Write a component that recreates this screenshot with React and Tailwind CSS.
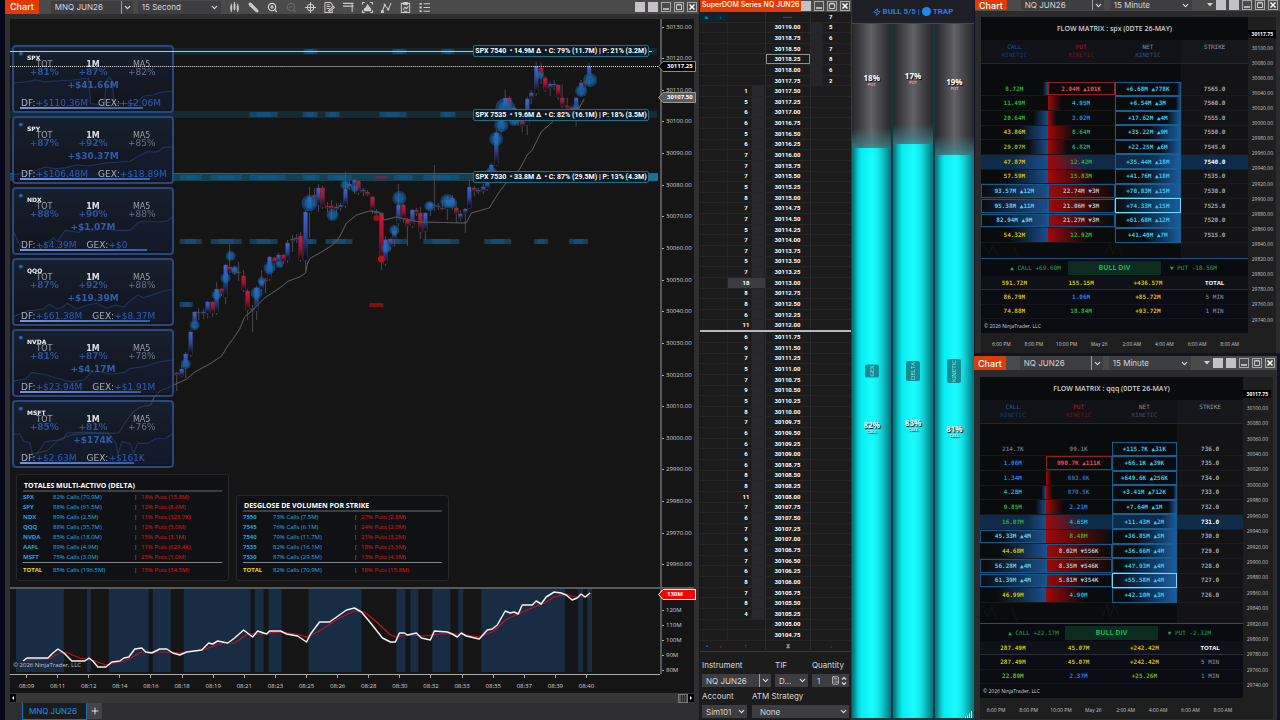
import React, { useState } from 'react';
import { ChevronDown, Pencil, ZoomIn, ZoomOut, Plus, Zap, Calculator } from 'lucide-react';

const cards = [
  { name: 'SPX', tot: '+81%', m1: '+87%', ma5: '+82%', net: '+$41.66M', df: '+$110.36M', gex: '+$2.06M', bar: 84, line: '0,38 12,37 22,35 30,37 60,35 76,33 78,60 92,62 94,36 97,32 100,36 102,60 124,60 132,52 142,51 150,48 161,47' },
  { name: 'SPY', tot: '+87%', m1: '+92%', ma5: '+85%', net: '+$30.37M', df: '+$106.48M', gex: '+$18.89M', bar: 89, line: '0,60 10,58 22,56 32,52 42,54 52,53 64,50 76,51 92,48 104,47 118,46 128,40 136,36 146,36 153,31 161,31' },
  { name: 'NDX', tot: '+88%', m1: '+90%', ma5: '+88%', net: '+$1.07M', df: '+$4.39M', gex: '+$0', bar: 87, line: '0,46 6,60 14,64 26,64 40,52 44,56 52,44 66,46 72,42 80,44 92,42 104,44 118,44 126,36 132,34 148,35 156,34 161,30' },
  { name: 'QQQ', tot: '+87%', m1: '+92%', ma5: '+88%', net: '+$19.39M', df: '+$61.38M', gex: '+$8.37M', bar: 89, line: '0,60 14,54 30,52 36,47 44,52 50,50 54,46 64,52 74,48 84,46 94,51 104,48 112,50 118,44 126,37 132,40 144,36 152,33 161,31' },
  { name: 'NVDA', tot: '+81%', m1: '+87%', ma5: '+78%', net: '+$4.17M', df: '+$23.94M', gex: '+$1.91M', bar: 83, line: '0,53 12,51 18,44 30,46 44,50 58,54 72,52 78,44 86,43 100,46 112,44 118,40 132,38 144,34 152,32 161,31' },
  { name: 'MSFT', tot: '+85%', m1: '+81%', ma5: '+76%', net: '+$174K', df: '+$2.63M', gex: '+$161K', bar: 78, line: '0,34 6,34 10,42 16,43 20,60 32,42 50,40 54,33 72,32 96,33 104,44 106,56 110,42 118,44 122,54 126,44 136,44 144,39 154,39 161,34' },
];

const totals = [
  ['SPX', '82% Calls (70.9M)', '18% Puts (15.8M)'],
  ['SPY', '88% Calls (61.5M)', '12% Puts (8.6M)'],
  ['NDX', '89% Calls (2.5M)', '11% Puts (323.7K)'],
  ['QQQ', '88% Calls (35.7M)', '12% Puts (5.0M)'],
  ['NVDA', '85% Calls (18.0M)', '15% Puts (3.1M)'],
  ['AAPL', '89% Calls (4.9M)', '11% Puts (629.4K)'],
  ['MSFT', '75% Calls (3.0M)', '25% Puts (1.0M)'],
  ['TOTAL', '85% Calls (196.5M)', '15% Puts (34.5M)'],
];

const strikes = [
  ['7550', '73% Calls (7.5M)', '27% Puts (2.8M)'],
  ['7545', '76% Calls (6.1M)', '24% Puts (2.0M)'],
  ['7540', '79% Calls (11.7M)', '21% Puts (3.2M)'],
  ['7535', '82% Calls (16.1M)', '18% Puts (3.5M)'],
  ['7530', '87% Calls (29.5M)', '13% Puts (4.3M)'],
  ['TOTAL', '82% Calls (70.9M)', '18% Puts (15.8M)'],
];

// x, body top, body bottom, 1 = up / 0 = down, wick top, wick bottom
const candles = [
  [177, 373, 375, 0, 372, 391], [182, 369, 376, 1, 365, 377], [186, 354, 368, 1, 352, 378], [191, 332, 355, 1, 330, 357],
  [195, 312, 326, 1, 311, 330], [199, 312, 313, 1, 308, 320], [204, 312, 314, 1, 309, 319], [208, 302, 313, 1, 301, 319],
  [213, 302, 313, 0, 301, 317], [217, 289, 313, 1, 282, 315], [222, 289, 293, 0, 288, 296], [226, 265, 297, 1, 264, 304],
  [230, 267, 271, 0, 244, 273], [235, 268, 272, 1, 266, 275], [239, 272, 273, 0, 262, 281], [244, 276, 290, 0, 270, 292],
  [248, 291, 310, 0, 289, 320], [253, 309, 310, 1, 305, 332], [257, 288, 311, 1, 286, 320], [262, 281, 289, 1, 270, 291],
  [266, 280, 281, 0, 278, 293], [270, 257, 279, 1, 256, 281], [275, 258, 263, 0, 257, 265], [279, 255, 262, 1, 253, 264],
  [284, 255, 261, 0, 254, 264], [288, 243, 260, 1, 240, 263], [293, 239, 241, 1, 235, 252], [297, 238, 240, 1, 234, 243],
  [301, 236, 260, 0, 232, 262], [306, 212, 260, 1, 210, 273], [310, 197, 213, 1, 187, 238], [315, 195, 199, 0, 188, 206],
  [319, 188, 205, 1, 184, 212], [323, 188, 207, 0, 186, 209], [328, 206, 208, 0, 202, 212], [332, 206, 209, 0, 200, 220],
  [337, 207, 209, 1, 203, 216], [341, 205, 208, 1, 203, 211], [346, 189, 206, 1, 172, 208], [350, 184, 188, 1, 180, 190],
  [355, 180, 186, 1, 178, 194], [359, 181, 193, 0, 180, 195], [364, 190, 192, 1, 188, 196], [368, 192, 195, 0, 190, 196],
  [373, 197, 210, 0, 196, 214], [377, 212, 214, 1, 209, 216], [382, 213, 262, 0, 212, 270], [386, 240, 264, 1, 236, 266],
  [391, 239, 247, 1, 238, 250], [395, 231, 239, 1, 226, 247], [399, 205, 223, 1, 184, 226], [404, 205, 219, 0, 204, 223],
  [408, 220, 226, 0, 218, 246], [413, 210, 226, 1, 209, 228], [417, 210, 213, 0, 208, 216], [421, 213, 232, 0, 207, 239],
  [426, 213, 231, 1, 212, 240], [431, 203, 210, 1, 202, 216], [435, 205, 206, 0, 165, 211], [439, 206, 207, 1, 203, 210],
  [443, 208, 209, 0, 200, 210], [448, 200, 209, 1, 196, 220], [453, 198, 207, 0, 195, 210], [457, 208, 214, 0, 206, 223],
  [461, 214, 218, 1, 210, 221], [466, 209, 213, 1, 208, 233], [470, 187, 208, 1, 180, 209], [475, 188, 191, 0, 186, 196],
  [479, 190, 192, 1, 188, 194], [484, 187, 191, 1, 184, 194], [488, 181, 189, 1, 180, 191], [492, 165, 173, 1, 163, 180],
  [497, 133, 165, 1, 130, 166], [502, 115, 130, 1, 110, 133], [506, 98, 110, 1, 90, 114], [510, 98, 108, 0, 96, 112],
  [515, 108, 122, 1, 106, 125], [519, 118, 123, 0, 116, 126], [523, 121, 126, 0, 119, 132], [528, 99, 125, 1, 97, 135],
  [532, 93, 98, 1, 90, 104], [537, 66, 93, 1, 62, 96], [542, 68, 74, 0, 63, 84], [546, 78, 90, 0, 76, 92],
  [551, 84, 88, 1, 82, 96], [555, 84, 86, 1, 80, 90], [559, 85, 97, 0, 84, 100], [563, 98, 106, 0, 84, 108],
  [568, 106, 108, 0, 98, 110], [572, 108, 110, 0, 106, 114], [577, 98, 109, 1, 97, 127], [582, 83, 90, 1, 80, 96],
  [586, 82, 84, 0, 80, 90], [590, 66, 80, 1, 63, 86],
];

const bubbles = [
  [310, 203, 8], [333, 215, 6], [346, 185, 5], [355, 188, 4], [387, 248, 5], [395, 230, 5], [400, 198, 7], [430, 206, 5],
  [448, 201, 7], [453, 203, 5], [492, 173, 6], [497, 139, 7], [502, 125, 7], [506, 108, 10], [515, 120, 6], [541, 75, 4],
  [577, 108, 4], [582, 91, 6], [591, 80, 7], [231, 256, 5], [226, 278, 5], [235, 270, 4], [217, 295, 5], [195, 325, 5],
  [186, 364, 5], [257, 293, 6], [262, 281, 4], [270, 268, 6], [280, 264, 4],
];

const heat = [
  [304, 14, 51], [393, 14, 51], [442, 13, 51],
  [250, 28, 114], [303, 15, 114], [326, 14, 114], [380, 27, 114], [441, 15, 114],
  [180, 22, 177], [211, 31, 177], [250, 36, 177], [303, 17, 177], [328, 24, 177], [395, 18, 177], [424, 36, 177],
  [180, 22, 241], [211, 31, 241], [250, 28, 241], [303, 14, 241], [326, 27, 241], [380, 28, 241], [424, 36, 241], [485, 27, 241], [535, 14, 241], [570, 19, 241],
  [180, 13, 304],
];

const MA = '31,454 47,451 52,446 60,439 75,434 119,433 125,423 133,412 141,407 151,405 154,398 160,391 172,386 187,379 195,372 210,364 222,356 228,346 234,338 240,329 245,317 254,309 265,298 280,288 289,281 300,277 306,273 308,263 311,258 322,252 333,245 340,237 347,223 357,215 370,211 380,212 385,220 397,217 420,222 467,223 472,213 490,208 500,192 513,175 520,170 528,155 533,150 542,132 550,125 557,118 567,110 580,108 585,99';
const FLOW = '23,661 27,658 48,658 53,653 58,649 64,653 72,661 85,661 89,658 93,661 98,667 106,667 112,662 120,661 124,658 129,657 135,649 142,648 146,652 152,653 160,649 167,649 173,653 180,655 187,652 202,650 209,643 213,644 218,641 228,643 235,638 244,630 253,637 258,631 267,634 270,631 281,631 287,634 298,636 307,642 311,634 320,622 330,622 347,610 355,608 362,612 372,624 383,638 391,642 396,642 400,633 405,633 408,635 417,633 422,638 431,640 435,631 448,632 453,634 458,637 462,633 467,636 480,639 488,630 493,629 498,625 506,611 511,613 515,612 519,614 523,605 533,605 537,601 542,604 547,597 555,592 562,593 567,595 573,600 578,598 582,594 586,597 591,593';
const FLOW_AVG = '23,660 48,659 60,653 68,653 80,658 92,660 106,665 125,661 142,652 167,652 180,653 203,650 220,644 235,643 248,634 262,634 280,632 297,634 307,637 320,631 340,618 355,611 365,612 375,620 390,634 396,637 410,635 425,636 440,634 460,634 480,637 495,631 506,620 523,612 545,603 555,597 567,594 575,597 591,597';
const flowZones = [[16, 64], [87, 91], [109, 149], [153, 171], [184, 251], [255, 264], [269, 282], [309, 362], [397, 406], [411, 419], [433, 451], [459, 464], [482, 566], [579, 584], [588, 593]];

const times = ['08:09', '08:11', '08:12', '08:14', '08:16', '08:18', '08:19', '08:21', '08:23', '08:25', '08:26', '08:28', '08:30', '08:32', '08:33', '08:35', '08:37', '08:39', '08:40'];
const prices = Array.from({ length: 18 }, (_, i) => (30130 - i * 10).toFixed(2));

const bids = [1, 5, 6, 6, 5, 6, 7, 7, 7, 5, 8, 7, 7, 5, 7, 7, 5, 7, 18, 8, 8, 6, 11, 6, 9, 7, 5, 7, 9, 5, 8, 7, 6, 6, 6, 6, 8, 8, 11, 7, 6, 7, 9, 6, 7, 6, 8, 7, 8, 4];
const asks = [5, 6, 7, 8, 6, 2];
const ladder = Array.from({ length: 58 }, (_, i) => ({
  price: (30119 - i * 0.25).toFixed(2),
  ask: asks[i] ?? '',
  bid: bids[i - 6] ?? '',
}));

// level is the height of the fill in %, shift moves the labels with it
const meters = [
  { name: 'GEX', put: '18%', call: '82%', level: 82.2, shift: 0 },
  { name: 'DELTA', put: '17%', call: '83%', level: 82.7, shift: -2 },
  { name: 'KINETIC', put: '19%', call: '81%', level: 81.1, shift: 4 },
];

const G = '#2fb02f';
const Y = '#d4be00';
const C = '#13b4d6';
const B = '#2080e8';
const BOX = '#5ccbee';
const PBOX = '#a9bfcb';

// cells: [text, colour, shade width in %, box]
const spx = {
  title: 'FLOW MATRIX : spx (0DTE 26-MAY)',
  bias: 'BULL DIV',
  callDiv: '▲ CALL +69.60M',
  putDiv: '▼ PUT -18.56M',
  rows: [
    ['7565.0', ['8.72M', G, 8], ['2.04M ▲101K', '#e05252', 0, 'red'], ['+6.68M ▲778K', 6]],
    ['7560.0', ['11.49M', G, 0], ['4.95M', C, 20], ['+6.54M ▲3M', 8]],
    ['7555.0', ['20.64M', G, 22], ['3.02M', B, 12], ['+17.62M ▲4M', 22]],
    ['7550.0', ['43.86M', Y, 45], ['8.64M', '#1fae5a', 38], ['+35.22M ▲9M', 48]],
    ['7545.0', ['29.07M', '#86b31c', 30], ['6.82M', '#16a77a', 30], ['+22.25M ▲6M', 32]],
    ['7540.0', ['47.87M', Y, 50], ['12.42M', G, 55], ['+35.44M ▲18M', 50]],
    ['7535.0', ['57.59M', Y, 60], ['15.83M', '#4da628', 70], ['+41.76M ▲18M', 58]],
    ['7530.0', ['93.57M ▲12M', BOX, 98, 'blue'], ['22.74M ▼3M', PBOX, 100, 'blue'], ['+70.83M ▲15M', 96]],
    ['7525.0', ['95.38M ▲11M', BOX, 100, 'blue'], ['21.06M ▼3M', PBOX, 94, 'blue'], ['+74.33M ▲15M', 100, true]],
    ['7520.0', ['82.94M ▲9M', BOX, 88, 'blue'], ['21.27M ▼3M', PBOX, 95, 'blue'], ['+61.68M ▲12M', 84]],
    ['7515.0', ['54.32M', Y, 57], ['12.92M', G, 58], ['+41.40M ▲7M', 56]],
  ],
  active: '7540.0',
  totals: [
    ['591.72M', Y, '155.15M', Y, '+436.57M', Y, 'TOTAL'],
    ['86.79M', Y, '1.06M', B, '+85.72M', Y, '5 MIN'],
    ['74.88M', Y, '18.84M', G, '+93.72M', Y, '1 MIN'],
  ],
};

const qqq = {
  title: 'FLOW MATRIX : qqq (0DTE 26-MAY)',
  bias: 'BULL DIV',
  callDiv: '▲ CALL +22.17M',
  putDiv: '▼ PUT -2.32M',
  rows: [
    ['736.0', ['214.7K', '#6d7178', 0], ['99.1K', '#6d7178', 0], ['+115.7K ▲31K', 0]],
    ['735.0', ['1.06M', B, 0], ['990.7K ▲111K', '#e05252', 0, 'red'], ['+66.1K ▲39K', 0]],
    ['734.0', ['1.34M', B, 0], ['693.6K', '#2a6bb8', 9], ['+649.6K ▲256K', 0]],
    ['733.0', ['4.28M', C, 7], ['870.5K', '#2a6bb8', 10], ['+3.41M ▲712K', 6]],
    ['732.0', ['9.85M', G, 16], ['2.21M', B, 26], ['+7.64M ▲1M', 14]],
    ['731.0', ['16.07M', G, 28], ['4.65M', C, 55], ['+11.43M ▲2M', 24]],
    ['730.0', ['45.33M ▲4M', BOX, 74, 'blue'], ['8.48M', G, 100], ['+36.85M ▲5M', 66]],
    ['729.0', ['44.68M', Y, 72], ['8.02M ▼556K', PBOX, 95, 'blue'], ['+36.66M ▲4M', 66]],
    ['728.0', ['56.28M ▲4M', BOX, 92, 'blue'], ['8.35M ▼546K', PBOX, 98, 'blue'], ['+47.93M ▲4M', 86]],
    ['727.0', ['61.39M ▲4M', BOX, 100, 'blue'], ['5.81M ▼354K', PBOX, 68, 'blue'], ['+55.58M ▲4M', 100, true]],
    ['726.0', ['46.99M', Y, 76], ['4.90M', C, 58], ['+42.10M ▲3M', 76]],
  ],
  active: '731.0',
  totals: [
    ['287.49M', Y, '45.07M', Y, '+242.42M', Y, 'TOTAL'],
    ['287.49M', Y, '45.07M', Y, '+242.42M', Y, '5 MIN'],
    ['22.89M', '#6fb322', '2.37M', B, '+25.26M', '#6fb322', '1 MIN'],
  ],
};

const sideTimes = ['6:00 PM', '8:00 PM', '10:00 PM', 'May 26', '2:00 AM', '4:00 AM', '6:00 AM', '8:00 AM'];
const sidePrices = Array.from({ length: 19 }, (_, i) => (30100 - i * 20).toFixed(2));

const boxStyles = {
  red: 'shadow-[inset_0_0_0_1px_#8e2024]',
  blue: 'shadow-[inset_0_0_0_1px_#16588a]',
};

function Select({ label, value, options, className = '', split }) {
  const [current, setCurrent] = useState(value);
  return (
    <span className={`relative flex items-center bg-[#3d3d42] ${className}`}>
      <select
        aria-label={label}
        value={current}
        onChange={(e) => setCurrent(e.target.value)}
        className="h-full w-full appearance-none overflow-hidden bg-transparent pl-1 pr-3 text-[8px] leading-[10px] text-[#d6d6d6] outline-none"
      >
        {[value, ...(options || [])].map((o) => <option key={o} value={o}>{o}</option>)}
      </select>
      <span className={`pointer-events-none absolute inset-y-0 right-0 flex w-3 items-center justify-center ${split ? 'border-l border-[#a0a0a0]' : ''}`}>
        <ChevronDown size={9} strokeWidth={3} color="#e0e0e0" />
      </span>
    </span>
  );
}

function WindowButtons({ blanks = 2 }) {
  const box = 'h-[10px] w-[10px] shrink-0';
  return (
    <div className="flex items-center gap-[3px]">
      {Array.from({ length: blanks }, (_, i) => (
        <button key={i} aria-label={`Link ${i + 1}`} className={`${box} bg-[#c4c2c4]`} />
      ))}
      <button aria-label="Minimize" className={`${box} border border-[#a8a8a8]`}>
        <svg viewBox="0 0 8 8" className="block h-full w-full"><path d="M1 6h6" stroke="#eee" strokeWidth="1.3" /></svg>
      </button>
      <button aria-label="Maximize" className={`${box} border border-[#a8a8a8]`}>
        <svg viewBox="0 0 8 8" className="block h-full w-full"><path d="M1.5 2h5v4.5h-5z M1.5 1.3h5" stroke="#ddd" fill="none" strokeWidth="0.9" /></svg>
      </button>
      <button aria-label="Close" className={`${box} border border-[#a8a8a8]`}>
        <svg viewBox="0 0 8 8" className="block h-full w-full"><path d="M1.5 1.5l5 5M6.5 1.5l-5 5" stroke="#fff" strokeWidth="1.5" /></svg>
      </button>
    </div>
  );
}

function ToolIcon({ d, fill }) {
  return (
    <svg viewBox="0 0 12 12" width="11" height="11" className="shrink-0">
      {fill && <path d={fill} fill="#cfcaca" />}
      <path d={d} fill="none" stroke="#cfcaca" strokeWidth="1.1" />
    </svg>
  );
}

function Toolbar() {
  return (
    <div className="flex items-center gap-2 pl-[8px]">
      <ToolIcon d="M2.5 2v9M6 0v9M9.5 2v9" fill="M1.5 4h2v5h-2z M5 2h2v6h-2z M8.5 4h2v5h-2z" />
      <Pencil size={11} color="#cfcaca" fill="#cfcaca" className="-scale-x-100" />
      <ZoomIn size={11} color="#dedada" strokeWidth={2.5} />
      <ZoomOut size={11} color="#666" strokeWidth={2.5} />
      <svg viewBox="0 0 12 12" width="11" height="11" className="shrink-0">
        <circle cx="6" cy="6" r="3.5" fill="none" stroke="#cfcaca" strokeWidth="1.1" />
        <path d="M6 0v12M0 6h12" stroke="#cfcaca" strokeWidth="1.1" />
      </svg>
      <ToolIcon d="M1 .6h6l2 2v2M9 9v2.4H1V.6M3 3h3M3 5h4M3 7h3M5 9.5l5-5 1.3 1.3-5 4.5z" />
      <ToolIcon d="M.5 1.5h11M.5 4.5h11M10 1v10M0 1.5h2M0 4.5h2" />
      <ToolIcon d="M.6 3V.6H3M9 .6h2.4V3M.6 9v2.4H3M9 11.4h2.4V9" fill="M2 10V7l2-1 2-4 2 3 2 2v3z" />
      <ToolIcon d="M1.5 10L4 3l4 5.5L11 1" fill="M0 9h3v3H0z M3 2h2v2H3z M7 7h2v2H7z" />
      <ToolIcon d="M1.5 1.5h9v10h-9zM4 .6h4v2H4zM3.5 8.5l2-3 1.5 2L9 4.5M4 10h4" />
      <ToolIcon d="M5 2h7M5 6h7M5 10h7" fill="M.5 1h2.5v2H.5z M.5 5h2.5v2H.5z M.5 9h2.5v2H.5z" />
    </div>
  );
}

function AssetCard({ card }) {
  return (
    <article className="relative h-[68px] rounded-[4px] border-2 border-[#2a4a86] bg-linear-to-b from-[#172130] to-[#10141c] font-['DejaVu_Sans',sans-serif]">
      <svg viewBox="0 0 161 68" preserveAspectRatio="none" className="absolute inset-0 h-full w-full">
        <polygon points={`0,66 ${card.line} 161,66`} fill="#16223c" opacity="0.4" />
        <polyline points={card.line} fill="none" stroke="#20375f" strokeWidth="1.2" />
        <circle cx="7" cy="7" r="2" fill="#3561b4" />
      </svg>
      <div className="relative px-[6px] pt-[8px]">
        <h3 className="pl-[7px] text-[6px] leading-[6px] font-bold text-white">{card.name}</h3>
        <dl className="grid grid-cols-3 text-center">
          <div>
            <dt className="text-[8px] leading-[7px] text-[#a4a8b0]">TOT</dt>
            <dd className="text-[9px] leading-[8px] font-bold text-[#2f56a0]">{card.tot}</dd>
          </div>
          <div>
            <dt className="text-[8px] leading-[7px] font-bold text-[#e4e7ec]">1M</dt>
            <dd className="text-[9px] leading-[8px] font-bold text-[#2f56a0]">{card.m1}</dd>
          </div>
          <div>
            <dt className="text-[8px] leading-[7px] text-[#a4a8b0]">MA5</dt>
            <dd className="text-[9px] leading-[8px] text-[#68758f]">{card.ma5}</dd>
          </div>
        </dl>
        <p className="pt-[4px] text-center text-[9px] leading-[10px] font-bold text-[#3560b0]">{card.net}</p>
        <p className="flex gap-[10px] pt-[10px] pl-px text-[9px] leading-[7px] whitespace-nowrap text-[#b4b8be]">
          <span>DF:<span className="text-[#2f60c4]">{card.df}</span></span>
          <span>GEX:<span className="text-[#2f60c4]">{card.gex}</span></span>
        </p>
        <div className="h-[2px] bg-[#141c2c]">
          <div className="h-full bg-linear-to-r from-[#7d9be8] to-[#3762ae]" style={{ width: `${card.bar}%` }} />
        </div>
      </div>
    </article>
  );
}

function VolumePanel({ title, rows, className }) {
  return (
    <section className={`w-[213px] rounded-[3px] border border-[#26272b] bg-[#0f1115] px-[6px] pb-[5px] font-['Open_Sans',sans-serif] ${className}`}>
      <h2 className="border-b-2 border-[#3c3e42] pl-px text-[7px] leading-[9px] font-bold text-white">{title}</h2>
      <table className="w-full border-collapse text-[6px] leading-[10px]">
        <tbody>
          {rows.map(([name, calls, puts]) => {
            const last = name === 'TOTAL';
            return (
              <tr key={name} className={last ? 'border-t border-[#85878a]' : ''}>
                <th scope="row" className={`w-[30px] p-0 text-left font-bold ${last ? 'pt-[2px] text-[#f0dc20]' : 'text-[#1ea4e0]'}`}>{name}</th>
                <td className={`w-[81px] p-0 text-[#1cb2ea] ${last ? 'pt-[2px]' : ''}`}>{calls}</td>
                <td className={`w-[7px] p-0 text-[#9a9a9a] ${last ? 'pt-[2px]' : ''}`}>|</td>
                <td className={`p-0 text-[#f01010] ${last ? 'pt-[2px]' : ''}`}>{puts}</td>
              </tr>
            );
          })}
        </tbody>
      </table>
    </section>
  );
}

function LevelTag({ children, className }) {
  return (
    <div className={`absolute right-[11px] flex h-[12px] w-[176px] items-center justify-center rounded-[2px] border border-[#17708f] bg-[#0e1c24] font-['Roboto',sans-serif] text-[7px] leading-[10px] font-bold whitespace-nowrap text-white ${className}`}>
      {children}
    </div>
  );
}

function PriceChart() {
  return (
    <div className="relative min-w-0 flex-1 overflow-hidden font-['Open_Sans',sans-serif]">
      <svg viewBox="10 19 651 568" preserveAspectRatio="none" className="absolute inset-0 h-full w-full">
        <defs>
          <linearGradient id="up" x1="0" y1="0" x2="0" y2="1">
            <stop offset="0" stopColor="#4067d8" /><stop offset="0.5" stopColor="#2b449c" /><stop offset="1" stopColor="#07080d" />
          </linearGradient>
          <linearGradient id="down" x1="0" y1="0" x2="0" y2="1">
            <stop offset="0" stopColor="#d4143c" /><stop offset="0.5" stopColor="#a01030" /><stop offset="1" stopColor="#1a070c" />
          </linearGradient>
        </defs>
        <rect x="10" y="48" width="648" height="7" fill="#14272f" />
        <rect x="10" y="111" width="648" height="7" fill="#142b33" />
        <rect x="10" y="174" width="649" height="7" fill="#134152" />
        <rect x="10" y="173" width="649" height="1" fill="#176c86" />
        <rect x="648" y="174" width="11" height="7" fill="#14759a" />
        {heat.map(([x, w, y]) => (
          <g key={`${x}-${y}`} fill="#155a8e">
            <rect x={x} y={y - 2} width={w} height="5" opacity="0.6" />
            <rect x={x + w / 4} y={y - 2} width={w / 2} height="5" opacity="0.5" />
          </g>
        ))}
        <rect x="370" y="303" width="14" height="4" fill="#7e1010" />
        <rect x="376" y="176" width="12" height="3" fill="#5a3048" />
        {candles.map(([x, top, bottom, up, hi, lo]) => (
          <g key={x}>
            <path d={`M${x} ${hi}V${lo}`} stroke="#56565a" strokeWidth="0.8" />
            <rect x={x - 2} y={top} width="4" height={bottom - top} fill={up ? 'url(#up)' : 'url(#down)'} stroke="#3f3f48" strokeWidth="0.4" />
          </g>
        ))}
        <polyline points={MA} fill="none" stroke="#56565a" strokeWidth="1" />
        {bubbles.map(([x, y, r]) => (
          <g key={`${x}-${y}`} fill="#1a72bd">
            <circle cx={x} cy={y} r={r} opacity="0.45" />
            <circle cx={x} cy={y} r={r * 0.65} opacity="0.5" />
          </g>
        ))}
        <circle cx="382" cy="259" r="3.5" fill="#b01414" />
        <circle cx="377" cy="218" r="3" fill="#981414" />
      </svg>
      <div className="absolute top-[26px] left-[2px] flex w-[162px] flex-col gap-[3px] opacity-95">
        {cards.map((card) => <AssetCard key={card.name} card={card} />)}
      </div>
      <svg viewBox="10 19 651 568" preserveAspectRatio="none" className="pointer-events-none absolute inset-0 h-full w-full">
        <path d="M10 51.5H653" stroke="#d2d250" strokeWidth="1" />
        <path d="M10 66.5H661" stroke="#e8e8e8" strokeWidth="1" strokeDasharray="1 1" />
        <polyline points={MA} fill="none" stroke="#56565a" strokeWidth="0.8" opacity="0.6" />
      </svg>
      <LevelTag className="top-[26px]">SPX 7540 &nbsp;• 14.9M Δ &nbsp;• C: 79% (11.7M) | P: 21% (3.2M)</LevelTag>
      <LevelTag className="top-[90px]">SPX 7535 &nbsp;• 19.6M Δ &nbsp;• C: 82% (16.1M) | P: 18% (3.5M)</LevelTag>
      <LevelTag className="top-[152px]">SPX 7530 &nbsp;• 33.8M Δ &nbsp;• C: 87% (29.5M) | P: 13% (4.3M)</LevelTag>
      <div className="absolute bottom-[6px] left-[6px] flex items-end gap-[7px]">
        <VolumePanel title="TOTALES MULTI-ACTIVO (DELTA)" rows={totals} className="pt-[6px]" />
        <VolumePanel title="DESGLOSE DE VOLUMEN POR STRIKE" rows={strikes} className="pt-[5px]" />
      </div>
    </div>
  );
}

function AxisFlag({ children, className, fill, stroke }) {
  return (
    <div className={`absolute -left-[4px] flex h-[11px] w-[38px] items-center pl-[9px] text-[6px] font-bold text-white ${className}`}>
      <svg viewBox="0 0 38 11" preserveAspectRatio="none" className="absolute inset-0 h-full w-full">
        <path d="M.5 5.5L5 .5H37.5V10.5H5z" fill={fill} stroke={stroke} />
      </svg>
      <span className="relative">{children}</span>
    </div>
  );
}

function MainWindow() {
  return (
    <main className="flex min-w-0 flex-1 flex-col border-r border-[#1a1a1c] bg-[#2f2f32]">
      <header className="flex h-[14px] shrink-0 items-center bg-[#4a4a4b] pr-[2px]">
        <h1 className="flex h-full items-center bg-[#e03a06] px-[5px] text-[9px] font-medium text-white">Chart</h1>
        <Select label="Instrument" value="MNQ JUN26" className="ml-[12px] h-[13px] w-[82px]" split />
        <Select label="Interval" value="15 Second" options={['15 Minute']} className="ml-[5px] h-[13px] w-[83px]" />
        <Toolbar />
        <div className="ml-auto"><WindowButtons /></div>
      </header>
      <div className="mx-[5px] mt-[5px] flex min-h-0 flex-1 flex-col bg-[#151515]">
        <div className="flex min-h-0 flex-1">
          <PriceChart />
          <div className="relative flex w-[34px] shrink-0 flex-col justify-between border-l-2 border-[#58585a] pb-[14px] font-['Open_Sans',sans-serif] text-[6px] text-[#cfcfcf]">
            {prices.map((p) => (
              <div key={p} className="flex h-[16px] items-center gap-[2px]"><i className="h-px w-[2px] bg-[#aaa]" />{p}</div>
            ))}
            <AxisFlag className="top-[42px]" fill="#000" stroke="#8a8a8a">30117.25</AxisFlag>
            <AxisFlag className="top-[73px]" fill="#5c5c5c" stroke="#9a9a9a">30107.50</AxisFlag>
          </div>
        </div>
        <div className="flex h-[87px] shrink-0 border-t-2 border-[#58585a]">
          <div className="relative min-w-0 flex-1">
            <svg viewBox="10 589 651 85" preserveAspectRatio="none" className="absolute inset-0 h-full w-full">
              {flowZones.map(([a, b]) => <rect key={a} x={a} y="588" width={b - a} height="84" fill="#182c44" />)}
              <polyline points={FLOW_AVG} fill="none" stroke="#c80f1c" strokeWidth="1.2" />
              <polyline points={FLOW} fill="none" stroke="#f2f2f2" strokeWidth="1.5" strokeLinejoin="round" />
            </svg>
            <p className="absolute bottom-[5px] left-[3px] font-['Open_Sans',sans-serif] text-[6px] leading-[8px] text-[#c6c6c6]">© 2026 NinjaTrader, LLC</p>
          </div>
          <div className="relative flex w-[34px] shrink-0 flex-col border-l-2 border-[#58585a] pt-[14px] font-['Open_Sans',sans-serif] text-[6px] leading-[15px] text-[#cfcfcf]">
            {['120M', '110M', '100M', '90M', '80M'].map((v) => (
              <div key={v} className="flex shrink-0 items-center gap-[2px]"><i className="h-px w-[2px] bg-[#aaa]" />{v}</div>
            ))}
            <AxisFlag className="top-0" fill="#f00" stroke="#fff">130M</AxisFlag>
          </div>
        </div>
        <div className="h-[19px] shrink-0 pr-[34px]">
          <div className="flex border-t border-[#a8a8a8] pr-[58px] pl-px font-['Open_Sans',sans-serif] text-[6px] leading-[8px] text-[#d0d0d0]">
            {times.map((t) => (
              <div key={t} className="flex flex-1 flex-col items-center gap-[4px]"><i className="h-[3px] w-px bg-[#aaa]" />{t}</div>
            ))}
          </div>
        </div>
      </div>
      <div className="mx-[5px] flex h-[10px] shrink-0 items-center justify-between bg-[#373737] text-white">
        <button aria-label="Scroll left" className="flex h-[8px] w-[6px] items-center justify-center bg-black">
          <svg viewBox="0 0 4 4" width="4" height="4"><path d="M3 0v4L1 2z" fill="#fff" /></svg>
        </button>
        <div className="flex items-center">
          <span className="flex h-[9px] w-[10px] justify-center gap-px border border-[#777] bg-[#555]">
            <i className="w-px bg-[#222]" /><i className="w-px bg-[#222]" /><i className="w-px bg-[#222]" />
          </span>
          <button aria-label="Scroll right" className="flex h-[8px] w-[6px] items-center justify-center bg-black">
            <svg viewBox="0 0 4 4" width="4" height="4"><path d="M1 0v4L3 2z" fill="#fff" /></svg>
          </button>
        </div>
      </div>
      <footer className="flex h-[17px] shrink-0 bg-[#2f2f32] pl-[17px]">
        <button className="w-[65px] border border-t-0 border-[#1272b8] bg-[#1c1c1e] pr-[3px] text-[8px] leading-[13px] font-medium text-[#1585d8]">MNQ JUN26</button>
        <button aria-label="Add tab" className="flex h-[16px] w-[15px] items-center justify-center bg-[#444448]"><Plus size={10} color="#fff" /></button>
      </footer>
    </main>
  );
}

function SuperDom() {
  return (
    <section className="flex w-[152px] shrink-0 flex-col border-r border-[#3a3a3c] bg-[#1c1c1c] text-[#d8d8d8]">
      <header className="flex h-[12px] shrink-0 items-center justify-between bg-[#4a4a4b] pr-px">
        <h2 className="flex h-full items-center bg-[#e03a06] px-[2px] pb-px text-[7px] font-medium whitespace-nowrap text-white">SuperDOM Series NQ JUN26</h2>
        <WindowButtons blanks={1} />
      </header>
      <div className="min-h-0 flex-1">
        <table className="h-full w-full table-fixed border-collapse text-center font-['Roboto',sans-serif] text-[6px] leading-[8px] font-bold text-white">
          <colgroup><col className="w-[27px]" /><col className="w-[38px]" /><col className="w-[45px]" /><col /></colgroup>
          <tbody>
            <tr className="border-b border-[#262626]">
              <td className="p-0"><span className="flex gap-px text-[#1d93b8]"><i className="w-[13px] bg-[#072834] not-italic">▴</i><i className="w-[13px] bg-[#072834] not-italic">‹</i></span></td>
              <td className="p-0" />
              <td className="border-x border-[#2a2a2a] p-0 text-[#3b82c4]">----</td>
              <td className="p-0">7</td>
            </tr>
            {ladder.map(({ price, bid, ask }) => (
              <tr key={price} className={price === '30112.00' ? 'border-b-2 border-[#b9b9b9]' : 'border-b border-[#262626]'}>
                <td className="border-r border-[#262626] p-0" />
                <td className={`p-0 pl-0 ${bid === 18 ? 'bg-[#3b3b40]' : bid ? 'bg-linear-to-r from-transparent from-65% to-[#29292c] to-65%' : ''}`}>{bid}</td>
                <td className={`border-x border-[#2a2a2a] p-0 ${price === '30118.25' ? 'shadow-[inset_0_0_0_1px_#8e8e8e]' : ''}`}>{price}</td>
                <td className={`p-0 ${ask ? 'bg-linear-to-r from-[#26262a] from-30% to-transparent to-30%' : ''}`}>{ask}</td>
              </tr>
            ))}
            <tr className="border-y border-[#3a3a3a] text-[6px]">
              <td className="p-0"><span className="flex justify-around"><i className="text-[#1f6fb4] not-italic">▪</i><i className="text-[#c32222] not-italic">›</i></span></td>
              <td className="p-0 text-[#2f7ccc]">↑</td>
              <td className="border-x border-[#2a2a2a] p-0 text-[#999]">⧗</td>
              <td className="p-0 text-[#d82020]">↓</td>
            </tr>
          </tbody>
        </table>
      </div>
      <form className="flex h-[68px] shrink-0 flex-col px-[2px] pt-[8px] text-[8px] leading-[10px]">
        <div className="flex gap-[4px]">
          <div className="w-[69px]"><span>Instrument</span><Select label="Instrument" value="NQ JUN26" className="mt-[4px] h-[13px]" split /></div>
          <div className="w-[33px]"><span>TIF</span><Select label="TIF" value="D..." options={['Day', 'Gtc']} className="mt-[4px] h-[13px]" /></div>
          <div className="min-w-0 flex-1">
            <label htmlFor="qty">Quantity</label>
            <span className="mt-[4px] flex h-[13px] items-center bg-[#3d3d42] pr-px">
              <input id="qty" defaultValue="1" className="w-0 min-w-0 flex-1 bg-transparent pl-[5px] text-[8px] outline-none" />
              <Calculator size={9} color="#d6d6d6" />
              <svg viewBox="0 0 8 12" width="8" height="12"><path d="M2 4.5l2-2 2 2M2 7.5l2 2 2-2" fill="none" stroke="#e0e0e0" strokeWidth="1.2" /></svg>
            </span>
          </div>
        </div>
        <div className="mt-[4px] flex gap-[5px]">
          <div className="w-[45px]"><span>Account</span><Select label="Account" value="Sim101" className="mt-[4px] h-[13px]" /></div>
          <div className="min-w-0 flex-1"><span>ATM Strategy</span><Select label="ATM Strategy" value="None" className="mt-[4px] h-[13px] pl-[4px]" /></div>
        </div>
      </form>
    </section>
  );
}

function Meter({ meter }) {
  return (
    <div className="relative flex flex-1 flex-col justify-end overflow-hidden bg-linear-to-r from-[#27272b] via-[#626266] to-[#27272b] font-['Open_Sans',sans-serif]">
      <div className="relative bg-linear-to-r from-[#04777f] via-[#22ffff] to-[#04777f]" style={{ height: `${meter.level}%` }}>
        <div className="absolute inset-0 bg-linear-to-r from-transparent from-5% via-[#00f2fa]/90 via-25% to-transparent to-95%" />
        <div className="absolute inset-x-[12px] inset-y-0 bg-[#22ffff]/60 blur-xs" />
        <div className="absolute inset-x-0 bottom-full h-[20px] bg-linear-to-t from-[#3a9096]/70 to-transparent" />
      </div>
      <div className="absolute inset-x-0 flex flex-col items-center text-[8px] leading-[8px] font-bold text-white" style={{ top: `${50 + meter.shift}px` }}>
        <span className="[text-shadow:1px_1px_1px_#000]">{meter.put}</span>
        <span className="text-[4px] leading-[6px] text-[#e89aa8]">PUT</span>
      </div>
      <div className="absolute inset-x-0 top-1/2 flex -translate-y-1/2 justify-center">
        <span className="rounded-[2px] bg-[#148c93] px-px py-[3px] text-[6px] leading-[8px] text-[#7fe9ee] [writing-mode:vertical-rl] rotate-180">{meter.name}</span>
      </div>
      <div className="absolute inset-x-0 flex flex-col items-center text-[8px] leading-[8px] font-bold text-white" style={{ top: `calc(57.2% + ${meter.shift}px)` }}>
        <span className="[text-shadow:1px_1px_1px_#000]">{meter.call}</span>
        <span className="text-[4px] leading-[6px] text-[#b8f4ff] [text-shadow:1px_1px_1px_#045]">CALL</span>
      </div>
    </div>
  );
}

function Meters() {
  return (
    <section className="relative flex w-[122px] shrink-0 flex-col bg-[#0f3a40] pb-[2px]">
      <header className="flex h-[24px] shrink-0 items-center justify-center gap-[2px] border-b border-[#48484c] bg-[#1d1e26] font-['Roboto',sans-serif] text-[8px] font-bold text-[#2080ec]">
        <Zap size={8} strokeWidth={3} />
        <span>BULL 5/5 |</span>
        <i className="h-[9px] w-[9px] rounded-full bg-[#2088f4]" />
        <span>TRAP</span>
      </header>
      <div className="flex min-h-0 flex-1 gap-[2px]">
        {meters.map((m) => <Meter key={m.name} meter={m} />)}
      </div>
      <svg viewBox="0 0 8 8" width="8" height="8" className="absolute right-[1px] bottom-[2px]">
        <path d="M.5 8V7M2.5 8V5.5M4.5 8V3.5M6.5 8V1" stroke="#d8ffff" />
      </svg>
    </section>
  );
}

function MatrixCell({ cell, side, active }) {
  const [text, color, shade, box] = cell;
  const background = side === 'call'
    ? `linear-gradient(to left, #1a4f8c, transparent ${shade}%)`
    : `linear-gradient(to right, #a00808, transparent ${shade}%)`;
  return (
    <td
      className={`border-b border-[#17181c] p-0 font-bold ${box ? boxStyles[box] : ''} ${active ? 'border-[#1a4d78]' : ''}`}
      style={{ color, background: shade ? background : undefined }}
    >
      {text}
    </td>
  );
}

function FlowMatrix({ data, gap }) {
  return (
    <div className="relative flex flex-1 flex-col bg-[#0a0b0d] text-center">
      <h2 className="h-[23px] shrink-0 font-['Open_Sans',sans-serif] text-[7px] leading-[23px] font-semibold text-[#d0d0d4]">{data.title}</h2>
      <table className="h-[203px] w-full shrink-0 table-fixed border-collapse font-['DejaVu_Sans_Mono',monospace] text-[6px] leading-[8px]">
        <thead>
          <tr className="h-[23px] border-b border-[#25272e] bg-[#101218]">
            <th className="p-0 font-normal text-[#1a5da8]">CALL<br /><span className="text-[#163f70]">KINETIC</span></th>
            <th className="p-0 font-normal text-[#b02020]">PUT<br /><span className="text-[#6a181a]">KINETIC</span></th>
            <th className="p-0 font-normal text-[#80909c]">NET<br /><span className="text-[#3c5266]">KINETIC</span></th>
            <th className="bg-[#16171c] p-0 pt-[3px] align-top font-normal text-[#9a9ca2]">STRIKE</th>
          </tr>
        </thead>
        <tbody>
          <tr className="h-[19px]"><td colSpan="3" className="p-0" /><td className="bg-[#131316] p-0" /></tr>
          {data.rows.map(([strike, call, put, [net, shade, top]]) => {
            const active = strike === data.active;
            return (
              <tr key={strike} className={active ? 'bg-[#0f2b4a]' : ''}>
                <MatrixCell cell={call} side="call" active={active} />
                <MatrixCell cell={put} side="put" active={active} />
                <td
                  className={`p-0 font-bold text-[#3fc4e4] ${top ? 'shadow-[inset_0_0_0_1px_#6fdcff]' : 'shadow-[inset_0_0_0_1px_#155f92]'}`}
                  style={{ background: `linear-gradient(to left, #1a5ea2, transparent ${shade}%)` }}
                >
                  {net}
                </td>
                <td className={`border-b border-[#1b1b1f] p-0 font-bold ${active ? 'text-white' : 'bg-[#131316] text-[#a4a6aa]'}`}>{strike}</td>
              </tr>
            );
          })}
        </tbody>
      </table>
      <div className={`shrink-0 border-b border-[#1d4f80] bg-linear-to-r from-[#0a0b0d] from-75% to-[#131316] to-75% ${gap}`}>
        <svg viewBox="0 0 267 16" preserveAspectRatio="none" className="h-full w-full opacity-30">
          <path d="M2 2l6 9 4-8 5 11M32 3l6 12M125 10l4-9 3 11 4-10 5 8" stroke="#2b2b30" fill="none" />
        </svg>
      </div>
      <div className="flex h-[17px] shrink-0 items-center bg-[#0a0b10] px-[2px] font-['DejaVu_Sans_Mono',monospace] text-[6px] text-[#1aa35f]">
        <span className="flex-1 pl-5">{data.callDiv}</span>
        <strong className="w-[93px] bg-[#0c2c20] font-['Open_Sans',sans-serif] text-[7px] leading-[14px] text-[#10b45c]">{data.bias}</strong>
        <span className="flex-1 pr-5">{data.putDiv}</span>
      </div>
      <table className="h-[43px] w-full shrink-0 table-fixed border-collapse bg-[#0b0c13] font-['DejaVu_Sans_Mono',monospace] text-[6px] leading-[8px]">
        <tbody>
          {data.totals.map(([call, c1, put, c2, net, c3, label], i) => (
            <tr key={label} className={`border-b ${i === 0 ? 'border-[#2c2e36] bg-[#0e1118]' : 'border-[#15161d]'}`}>
              <td className="p-0 font-bold" style={{ color: c1 }}>{call}</td>
              <td className="p-0 font-bold" style={{ color: c2 }}>{put}</td>
              <td className="p-0 font-bold" style={{ color: c3 }}>{net}</td>
              <th scope="row" className={i === 0 ? "p-0 font-['Open_Sans',sans-serif] font-bold text-white" : 'p-0 font-normal text-[#8d93a3]'}>{label}</th>
            </tr>
          ))}
        </tbody>
      </table>
      <p className="flex-1 bg-[#0b0b12] pl-[3px] text-left font-['Open_Sans',sans-serif] text-[5px] leading-[14px] text-[#d0d0d0]">© 2026 NinjaTrader, LLC</p>
    </div>
  );
}

function MatrixWindow({ data, header, body, gap, axis, timeRow, className }) {
  return (
    <section className={`flex flex-col bg-[#2b2b2e] ${className}`}>
      <header className={`flex shrink-0 items-center bg-[#4a4a4b] pr-[2px] ${header}`}>
        <h2 className="flex h-full items-center bg-[#e03a06] px-[4px] text-[9px] leading-[9px] font-medium text-white">Chart</h2>
        <Select label="Instrument" value="NQ JUN26" className="ml-[14px] h-full w-[83px]" split />
        <Select label="Interval" value="15 Minute" options={['15 Second']} className="ml-[6px] h-full w-[82px]" />
        <div className="ml-auto flex items-center gap-[3px]">
          <svg viewBox="0 0 6 4" width="6" height="4"><path d="M0 0h6L3 3.5z" fill="#d0d0d0" /></svg>
          <WindowButtons />
        </div>
      </header>
      <div className={`mr-[4px] ml-[6px] flex flex-1 flex-col bg-[#1e1e1f] font-['Open_Sans',sans-serif] text-[5px] text-[#c0c0c0] ${body}`}>
        <div className="flex flex-1">
          <FlowMatrix data={data} gap={gap} />
          <div className={`flex shrink-0 flex-col text-right ${axis}`}>
            <span className="mt-[13px] mb-[2px] block bg-black pr-[3px] leading-[8px] font-bold text-white">30117.75</span>
            {sidePrices.map((p) => <span key={p} className="flex flex-1 items-center justify-end pr-[3px] leading-[6px]">{p}</span>)}
          </div>
        </div>
        <div className={`flex shrink-0 items-center text-center ${timeRow}`}>
          {sideTimes.map((t) => <span key={t} className="flex-1 whitespace-nowrap">{t}</span>)}
        </div>
      </div>
    </section>
  );
}

export default function App() {
  return (
    <div className="flex h-screen w-full overflow-hidden bg-[#05061a] pl-[5px] font-['Inter',sans-serif]">
      <MainWindow />
      <SuperDom />
      <Meters />
      <div className="flex w-[306px] shrink-0 flex-col justify-between bg-[#101526]">
        <MatrixWindow data={spx} header="h-[11px] pb-px" body="mt-[6px]" gap="h-[16px]" axis="w-[28px] pb-[6px]" timeRow="h-[20px] pt-[4px] pr-[30px] pl-[4px]" className="ml-px" />
        <MatrixWindow data={qqq} header="h-[14px]" body="mt-[7px]" gap="h-[21px]" axis="w-[30px] pr-[2px] pb-[5px]" timeRow="h-[21px] pt-[4px] pr-[34px]" className="mr-[3px] pb-[1px]" />
      </div>
    </div>
  );
}
